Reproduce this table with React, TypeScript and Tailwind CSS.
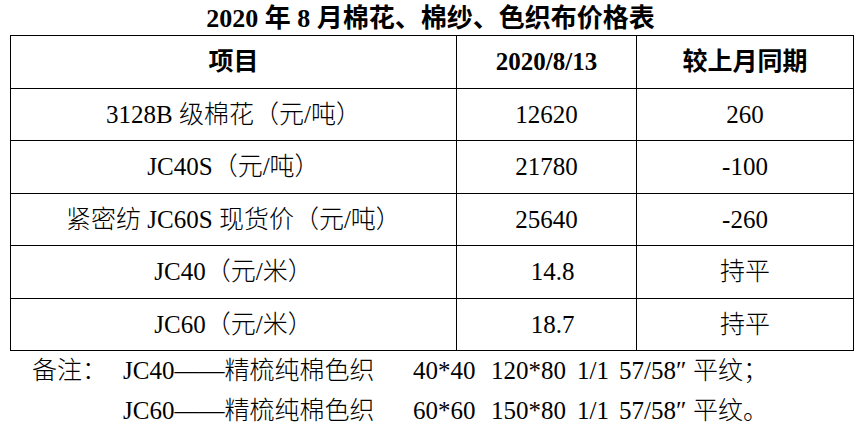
const rows = [
  { name: "3128B 级棉花（元/吨）", price: "12620", diff: "260" },
  { name: "JC40S（元/吨）", price: "21780", diff: "-100" },
  { name: "紧密纺 JC60S 现货价（元/吨）", price: "25640", diff: "-260" },
  { name: "JC40（元/米）", price: "14.8", diff: "持平", shift: true },
  { name: "JC60（元/米）", price: "18.7", diff: "持平", shift: true },
];

const notes = [
  { yarn: "JC40——精梳纯棉色织", count: "40*40", density: "120*80", weave: "1/1", width: "57/58″", tail: "平纹；" },
  { yarn: "JC60——精梳纯棉色织", count: "60*60", density: "150*80", weave: "1/1", width: "57/58″", tail: "平纹。" },
];

function NoteLine({ note }: { note: (typeof notes)[number] }) {
  return (
    <>
      <span className="w-[290px]">{note.yarn}</span>
      <span className="w-[78px]">{note.count}</span>
      <span className="w-[86px]">{note.density}</span>
      <span className="w-[42px]">{note.weave}</span>
      <span className="w-[74px]">{note.width}</span>
      <span>{note.tail}</span>
    </>
  );
}

export default function App() {
  return (
    <div className="w-[861px] h-[448px] bg-white text-black font-['Liberation_Serif','Noto_Sans_CJK_SC',serif] overflow-hidden">
      {/* Title */}
      <div className="h-[35px] pt-[3px] text-center text-[26px] leading-[32px] font-bold">
        2020 年 8 月棉花、棉纱、色织布价格表
      </div>

      {/* Table */}
      <div className="pl-[10px]">
        <table className="w-[843px] border-collapse text-[25px] font-light table-fixed">
          <colgroup>
            <col className="w-[446px]" />
            <col className="w-[180px]" />
            <col className="w-[217px]" />
          </colgroup>
          <thead>
            <tr className="h-[53px]">
              <th className="border border-black font-bold p-0">项目</th>
              <th className="border border-black font-bold p-0">2020/8/13</th>
              <th className="border border-black font-bold p-0">较上月同期</th>
            </tr>
          </thead>
          <tbody>
            {rows.map((r) => (
              <tr key={r.name} className="h-[52.4px]">
                <td className="border border-black text-center p-0">{r.name}</td>
                <td className={`border border-black text-center p-0 ${r.shift ? "pl-[12px]" : ""}`}>{r.price}</td>
                <td className="border border-black text-center p-0">{r.diff}</td>
              </tr>
            ))}
          </tbody>
        </table>
      </div>

      {/* Notes */}
      <div className="text-[25px] font-light leading-[40px] pt-0">
        <div className="flex whitespace-pre pl-[32px]">
          <span className="w-[91px]">备注：</span>
          <NoteLine note={notes[0]} />
        </div>
        <div className="flex whitespace-pre pl-[123px]">
          <NoteLine note={notes[1]} />
        </div>
      </div>
    </div>
  );
}
